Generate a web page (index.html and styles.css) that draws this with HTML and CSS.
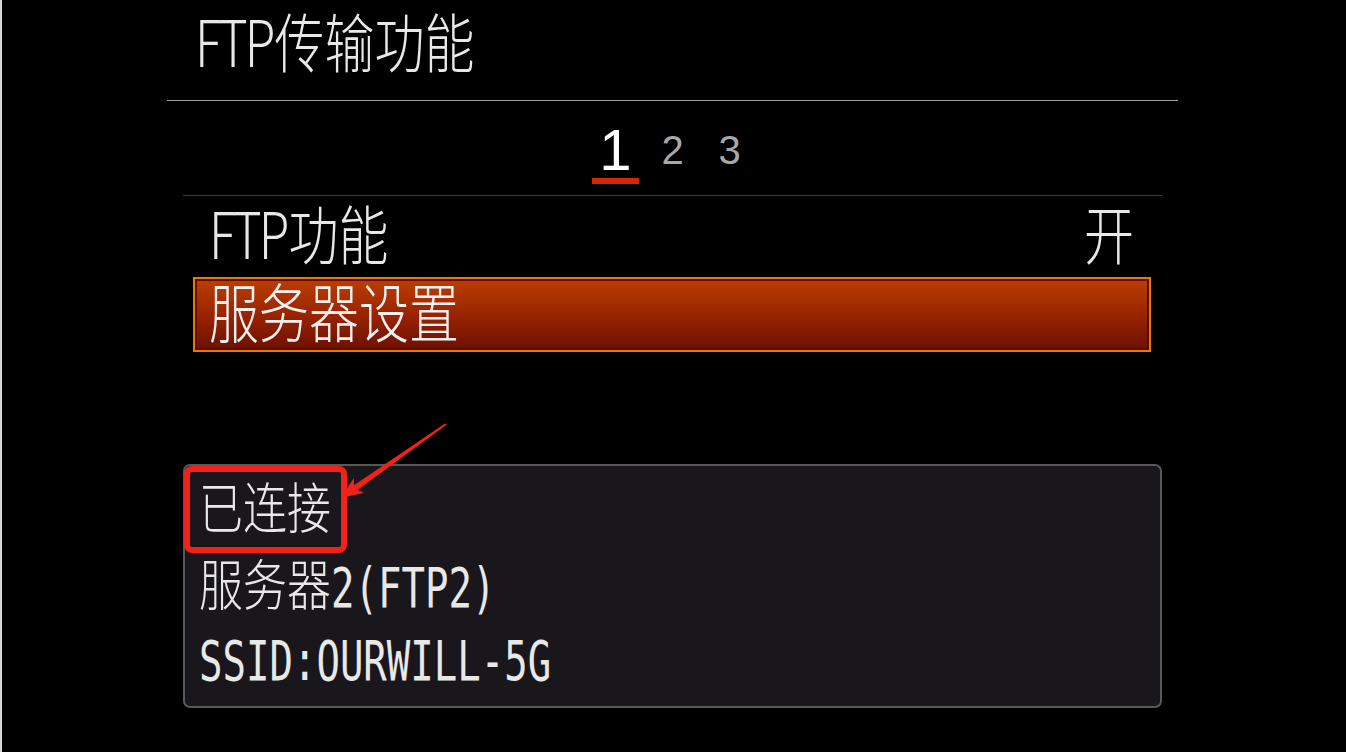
FILE: index.html
```html
<!DOCTYPE html>
<html lang="zh-CN">
<head>
    <meta charset="UTF-8">
    <title>FTP传输功能</title>
    <link rel="stylesheet" href="styles.css">
</head>
<body>
    <div class="screen">
        <!-- Titel -->
        <div class="title"><span class="tx"><span class="nar">FTP</span>传输功能</span></div>

        <div class="menu">
            <div class="tabs">
                <span class="tab active">1</span>
                <span class="tab">2</span>
                <span class="tab">3</span>
            </div>

            <div class="row">
                <span class="tx"><span class="nar">FTP</span>功能</span>
                <span class="tx">开</span>
            </div>
            <div class="row selected">
                <span class="tx">服务器设置</span>
            </div>

            <!-- Verbindungsstatus -->
            <div class="status">
                <div class="line"><span class="tx"><span class="cjk">已连接</span></span></div>
                <div class="line"><span class="tx"><span class="cjk">服务器</span><span class="lat">2(FTP2)</span></span></div>
                <div class="line"><span class="tx"><span class="lat">SSID:OURWILL-5G</span></span></div>
                <div class="mark"></div>
            </div>
        </div>
    </div>

    <svg class="arrow" width="1346" height="752" viewBox="0 0 1346 752">
        <polygon fill="#f0221a" points="341,498 364.2,492.7 357.4,490.1 446.6,424.8 445.4,423.2 354,485.2 353.8,477.9"/>
    </svg>
</body>
</html>
```

FILE: styles.css
```css
/* Grundlayout */
html, body {
    margin: 0;
    padding: 0;
    background: #000;
}

body {
    height: 752px;
    border-left: 2px solid #d8d8d8;
    box-sizing: border-box;
    font-family: 'Noto Sans CJK SC', sans-serif;
    font-weight: 300;
    color: #e8e8e8;
    position: relative;
    overflow: hidden;
}

.screen {
    width: 1011px;
    margin-left: 165px;
}

.tx {
    display: inline-block;
    line-height: 50px;
    transform: scaleY(1.28);
}

.nar {
    letter-spacing: -3px;
    margin-right: 2px;
}

.title {
    height: 101px;
    box-sizing: border-box;
    padding: 14px 0 0 28px;
    line-height: 50px;
    border-bottom: 1px solid #a0a0a0;
    font-size: 50px;
}

.menu {
    margin: 0 16px;
}

.tabs {
    height: 95px;
    box-sizing: border-box;
    padding-top: 21px;
    border-bottom: 1px solid #3c3c3c;
    display: flex;
    justify-content: center;
    gap: 10px;
}

.tab {
    width: 47px;
    height: 62px;
    box-sizing: border-box;
    line-height: 56px;
    text-align: center;
    border-bottom: 6px solid transparent;
    font-family: 'Liberation Sans', sans-serif;
    font-size: 40px;
    font-weight: 400;
    color: #a8a8a8;
}

.tab.active {
    font-size: 58px;
    color: #fff;
    border-bottom-color: #d42800;
}

.row {
    height: 81px;
    box-sizing: border-box;
    padding: 10px 28px 0 26px;
    line-height: 50px;
    display: flex;
    justify-content: space-between;
    align-items: flex-start;
    font-size: 50px;
}

.row.selected {
    height: 75px;
    padding: 5px 14px 0;
    margin: 0 11px 0 10px;
    border: 2px solid #e97a00;
    box-shadow: inset 0 0 0 2px #5e0a00;
    background: linear-gradient(#bd3e00, #9a2400 50%, #6c1000);
    color: #f0f0f0;
}

/* Statusfeld */
.status {
    position: relative;
    margin-top: 112px;
    height: 244px;
    box-sizing: border-box;
    padding: 3px 14px 0;
    border: 2px solid #585858;
    border-radius: 7px;
    background: #19171b;
}

.line {
    height: 77px;
    display: flex;
    align-items: center;
    font-family: 'DejaVu Sans Mono', 'Noto Sans CJK SC', monospace;
    font-size: 39px;
    font-weight: 400;
}

.line .tx {
    line-height: 46px;
    transform: scaleY(1.25);
}

.cjk {
    font-family: 'Noto Sans CJK SC', sans-serif;
    font-size: 44px;
    font-weight: 300;
}

.lat {
    display: inline-block;
    transform: scaleY(1.12);
}

.mark {
    position: absolute;
    left: -1px;
    top: 0;
    width: 163px;
    height: 87px;
    box-sizing: border-box;
    border: 6px solid #f0221a;
    border-radius: 8px;
}

.arrow {
    position: absolute;
    left: -2px;
    top: 0;
    pointer-events: none;
}
```
